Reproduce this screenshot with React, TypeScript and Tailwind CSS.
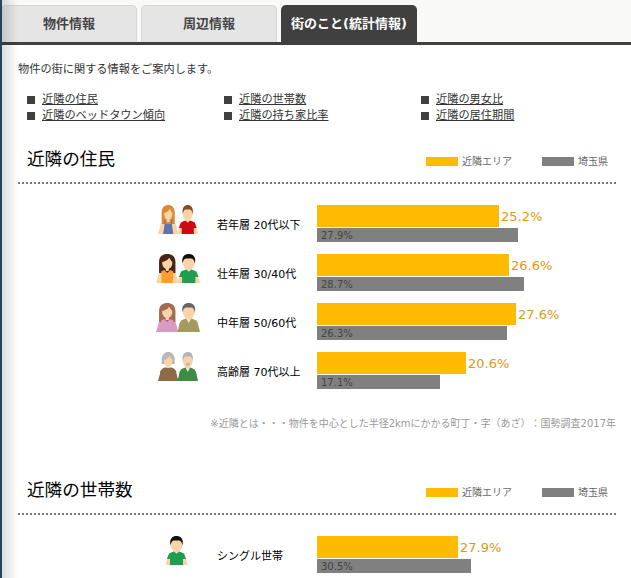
const jp = "font-['DejaVu_Sans','Noto_Sans_CJK_JP',sans-serif]"

type Person = { hair: string; shirt: string; long?: boolean; grey?: boolean; tank?: boolean; small?: boolean }

const skin = '#fbd3a8'

function Female({ p }: { p: Person }) {
  return (
    <g>
      <path d="M0 29 3 19Q4 16.500 7 15.500H15Q18 16.500 19 19L22 29Z" fill={p.long ? p.shirt : skin} />
      <g transform={p.small ? 'translate(1.300 0) scale(.88 1)' : undefined}>
        {p.grey ? (
          <path d="M3 8C3 2.500 7 0 11 0s8 2.500 8 8V12H3Z" fill={p.hair} />
        ) : (
          <path d="M3 8C3 2 7 0 11 0s8 2 8 8V19H15V20.500H7V19H3Z" fill={p.hair} />
        )}
        <ellipse cx="11" cy="9" rx="5" ry="6" fill={skin} />
        <path d="M6 8C8.500 7.500 12 6 13 3.500 14 5.500 15 7.500 16 8 16.500 3.500 14 2 11 2S5.500 3.500 6 8Z" fill={p.hair} />
      </g>
      <rect x="9.500" y="13" width="3" height="4" fill={skin} />
      {p.tank ? (
        <path d="M7 15H8V19H14V15H15V20L16.500 29H5.500L7 20Z" fill={p.shirt} />
      ) : (
        <path d="M5 17.500 8 16 11 19 14 16 17 17.500 16.500 29H5.500Z" fill={p.shirt} />
      )}
      {p.grey && <path d="M2.500 19 6 16H16L19.500 19 20 29H2Z" fill={p.shirt} />}
    </g>
  )
}

function Male({ p }: { p: Person }) {
  return (
    <g>
      <path d="M0 29 2.500 19H19.500L22 29Z" fill={p.long ? p.shirt : skin} />
      <g transform={p.small ? 'translate(1.300 0) scale(.88 1)' : undefined}>
        <ellipse cx="11" cy="8.500" rx="6" ry="7.500" fill={skin} />
        <path d="M5 9.500C3.500 2 7.500 0 11 0s7.500 2 6 9.500C16.500 6 15 4.500 13.500 4.500H8.500C7 4.500 5.500 6 5 9.500Z" fill={p.hair} />
      </g>
      <rect x="9" y="13" width="4" height="3.500" fill={skin} />
      <path d="M3.500 17.500Q6.500 16 8.500 15.500L11 17.500 13.500 15.500Q15.500 16 18.500 17.500L20.500 23H17.500V29H4.500V23H1.500Z" fill={p.shirt} />
      {p.long && <path d="M8.500 15.500 11 20 13.500 15.500 11 17Z" fill="#f4ead0" />}
      {p.grey && <path d="M8.800 10.500Q11 12.500 13.200 10.500L12.800 13.500H9.200Z" fill={p.hair} />}
    </g>
  )
}

function Couple({ f, m }: { f: Person; m: Person }) {
  return (
    <svg
      viewBox="0 0 43 29"
      preserveAspectRatio="none"
      className={f.small ? 'w-[40px] h-[29px] ml-[2px]' : 'w-[44px] h-[29px]'}
    >
      <Female p={f} />
      <g transform="translate(21 0)">
        <Male p={m} />
      </g>
    </svg>
  )
}

const residents = [
  {
    label: '若年層 20代以下', a: 182, ap: '25.2%', b: 201, bp: '27.9%',
    f: { hair: '#d98a33', shirt: '#5b74ad', tank: true, small: true }, m: { hair: '#8a4a22', shirt: '#cc0a14', small: true },
  },
  {
    label: '壮年層 30/40代', a: 192, ap: '26.6%', b: 207, bp: '28.7%',
    f: { hair: '#4a2414', shirt: '#ff9d33' }, m: { hair: '#111111', shirt: '#1f9d50' },
  },
  {
    label: '中年層 50/60代', a: 199, ap: '27.6%', b: 190, bp: '26.3%',
    f: { hair: '#a06c52', shirt: '#d99ac6', long: true }, m: { hair: '#666666', shirt: '#a39b5e', long: true },
  },
  {
    label: '高齢層 70代以上', a: 149, ap: '20.6%', b: 123, bp: '17.1%',
    f: { hair: '#b9b9b9', shirt: '#8f6a48', grey: true, long: true, small: true }, m: { hair: '#b5b5b5', shirt: '#3f8a45', grey: true, long: true, small: true },
  },
]

function Legend() {
  return (
    <div className="flex items-center text-[10px] leading-none text-[#666] mt-[3px] whitespace-nowrap">
      <span className="w-8 h-[9px] bg-[#ffbb00]" />
      <span className="ml-1 w-[80px]">近隣エリア</span>
      <span className="w-8 h-[9px] bg-[#808080]" />
      <span className="ml-1 w-[29px]">埼玉県</span>
    </div>
  )
}

function Heading({ title }: { title: string }) {
  return (
    <div className="ml-[18px] mr-[15px] h-[46px] border-b-2 border-dotted border-[#777] flex items-center justify-between pl-[9px] pr-[9px]">
      <h2 className="text-[17.6px] leading-none font-normal text-black">{title}</h2>
      <Legend />
    </div>
  )
}

function Bars({ a, ap, b, bp }: { a: number; ap: string; b: number; bp: string }) {
  return (
    <div className="flex flex-col gap-px">
      <div className="flex items-center">
        <div className="h-[22px] bg-[#ffbb00]" style={{ width: a }} />
        <span className="ml-[2px] text-[13px] leading-none text-[#dc9a14]">{ap}</span>
      </div>
      <div className="h-[14px] bg-[#808080] text-[10px] leading-[15px] pl-1 text-[#444]" style={{ width: b }}>{bp}</div>
    </div>
  )
}

function Tab({ label, active }: { label: string; active?: boolean }) {
  return active ? (
    <div className="w-[136px] h-[37px] rounded-t-[5px] bg-[#404040] flex items-center justify-center text-[13px] font-bold text-white">{label}</div>
  ) : (
    <div className="w-[136px] h-[37px] rounded-t-[5px] bg-[#e5e5e5] border border-b-0 border-[#d5d5d5] flex items-center justify-center text-[13px] font-bold text-[#444]">{label}</div>
  )
}

export default function App() {
  const links = ['近隣の住民', '近隣の世帯数', '近隣の男女比', '近隣のベッドタウン傾向', '近隣の持ち家比率', '近隣の居住期間']
  return (
    <div className={`${jp} w-[631px] h-[578px] overflow-hidden relative bg-white text-[#333]`}>
      <div className="flex gap-1 items-end h-[42px] pl-px bg-[#f9f9f8]">
        <Tab label="物件情報" />
        <Tab label="周辺情報" />
        <Tab label="街のこと(統計情報)" active />
      </div>
      <div className="h-[3px] bg-[#404040]" />

      <p className="pl-[18px] pt-[18px] text-[11.2px] leading-[14px]">物件の街に関する情報をご案内します。</p>
      <ul className="grid grid-cols-[197px_197px_197px] pl-[27px] mt-[15px]">
        {links.map(l => (
          <li key={l} className="flex items-center h-4 text-[11.2px]">
            <span className="w-2 h-2 bg-[#404040] mr-[7px]" />
            <span className="underline">{l}</span>
          </li>
        ))}
      </ul>

      <div className="mt-[14px]">
        <Heading title="近隣の住民" />
      </div>
      <div className="mt-[21px] flex flex-col gap-3">
        {residents.map(r => (
          <div key={r.label} className="flex items-start h-[37px]">
            <div className="ml-[156px] w-[61px]"><Couple f={r.f} m={r.m} /></div>
            <div className="w-[100px] mt-[14px] text-[11px] leading-[14px] text-black">{r.label}</div>
            <Bars a={r.a} ap={r.ap} b={r.b} bp={r.bp} />
          </div>
        ))}
      </div>
      <p className="mt-7 mr-[15px] text-right text-[10px] leading-[14px] text-[#999] [text-spacing-trim:space-all]">※近隣とは・・・物件を中心とした半径2kmにかかる町丁・字（あざ）：国勢調査2017年</p>

      <div className="mt-[38px]">
        <Heading title="近隣の世帯数" />
      </div>
      <div className="mt-[21px] flex items-start h-[37px]">
        <div className="ml-[164px] w-[53px]">
          <svg viewBox="0 0 22 29" className="w-[25px] h-[29px]">
            <Male p={{ hair: '#111111', shirt: '#1f9d50' }} />
          </svg>
        </div>
        <div className="w-[100px] mt-[14px] text-[11px] leading-[14px] text-black">シングル世帯</div>
        <Bars a={141} ap="27.9%" b={154} bp="30.5%" />
      </div>

      <div className="absolute left-0 top-0 bottom-0 w-[18px] bg-gradient-to-r from-black/15 to-transparent" />
      <div className="absolute left-0 top-0 bottom-0 w-[2px] bg-[#1f4560]" />
    </div>
  )
}
